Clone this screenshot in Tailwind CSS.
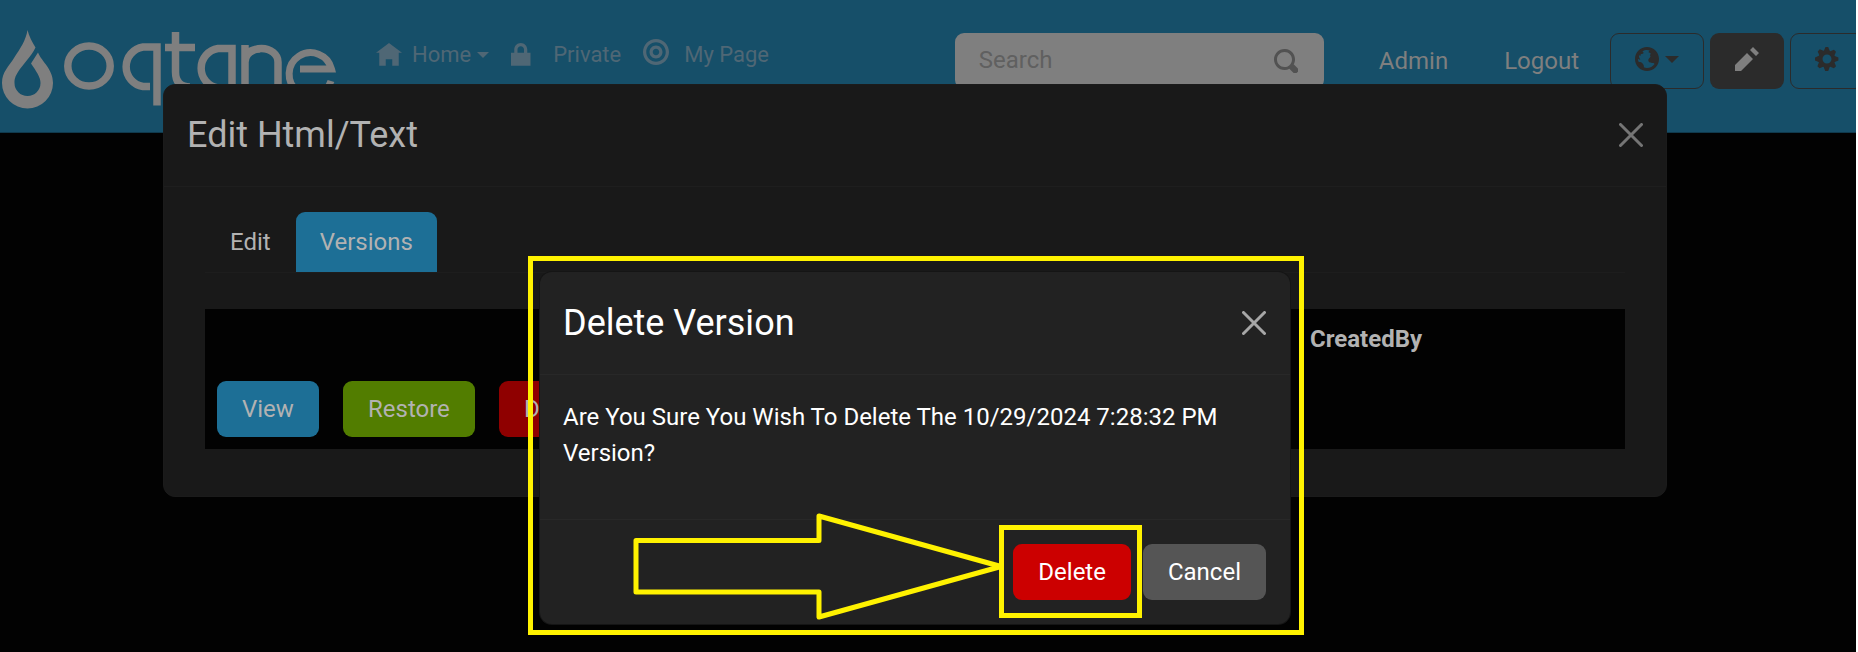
<!DOCTYPE html>
<html lang="en">
<head>
<meta charset="utf-8">
<meta name="viewport" content="width=device-width, initial-scale=1">
<title>Oqtane - Edit Html/Text</title>
<script src="https://cdn.jsdelivr.net/npm/@tailwindcss/browser@4"></script>
</head>
<body class="relative min-h-screen overflow-hidden border-r-2 border-white bg-[#020202] font-['Roboto',sans-serif] text-[24px] leading-9 text-[#b2b2b2]">

<header class="flex h-[133px] items-start overflow-hidden border-b border-[#10394c] bg-[#164f69]">
  <a href="#" aria-label="Oqtane" class="shrink-0">
    <svg class="h-[133px] w-[340px]" viewBox="0 0 340 133" fill="none" stroke="#7f7f7f" stroke-width="7.500">
      <path fill="#7f7f7f" stroke="none" d="M27.500 30C29 36 32 42 35.500 47.500C31 57 23 64 18 72C15 77 14.500 79 14.500 83A13 13 0 0 0 40.500 83C40.500 77 36 71 31 63.500L38 52.500C42 62 53 69 53 83A25.500 25.500 0 0 1 2 83C2 72 9 66 14 58C20 49 26 40 27.500 30Z"/>
      <ellipse cx="89" cy="66" rx="21.200" ry="20"/>
      <path d="M150 86.500H143A20 20 0 0 1 143 47H157V105.500"/>
      <path d="M175.500 32V72Q175.500 87 190 87M165 47.500H195"/>
      <path d="M225 88H218A20 20 0 0 1 218 48.500H232V92"/>
      <path d="M245 92V45M245 62A16.500 13.500 0 0 1 278 62V92M245 62Q246 49 260 49"/>
      <path d="M300 69H331.500A21.500 21.500 0 1 0 331 81" stroke-width="7"/>
    </svg>
  </a>
  <nav class="ml-9 flex items-center gap-[22px] pt-[37px] text-[22px] text-[#4f6775]">
    <a href="#" class="flex items-center">
      <svg class="mr-[10px] size-[26px]" viewBox="0 0 8 8" fill="currentColor"><path d="M4 .3l-4 3h1v4h2v-2h2v2h2v-4.030l1 .030-4-3z"/></svg>
      Home
      <svg class="ml-[6px] h-[6px] w-3" viewBox="0 0 12 6" fill="currentColor"><path d="M0 0h12L6 6z"/></svg>
    </a>
    <a href="#" class="flex items-center">
      <svg class="mr-[16px] size-[26px]" viewBox="0 0 8 8" fill="currentColor"><path d="M3 .3c-1.100 0-2 .9-2 2v1h-1v4h6v-4h-1v-1c0-1.100-.9-2-2-2zm0 1c.56 0 1 .44 1 1v1h-2v-1c0-.56.44-1 1-1z"/></svg>
      Private
    </a>
    <a href="#" class="flex items-center">
      <svg class="mr-[15px] mb-[6px] size-[26px]" viewBox="0 0 8 8" fill="currentColor"><path d="M4 0c-2.200 0-4 1.800-4 4s1.800 4 4 4 4-1.800 4-4-1.800-4-4-4zm0 1c1.660 0 3 1.340 3 3s-1.340 3-3 3-3-1.340-3-3 1.340-3 3-3zm0 1c-1.100 0-2 .9-2 2s.9 2 2 2 2-.9 2-2-.9-2-2-2zm0 1c.56 0 1 .44 1 1s-.44 1-1 1-1-.44-1-1 .44-1 1-1z"/></svg>
      My Page
    </a>
  </nav>
  <div class="-mr-[8px] ml-auto flex shrink-0 items-center pt-[33px]">
    <form class="flex h-14 w-[369px] items-center rounded-[9px] bg-[#7f7f7f] pr-[26px] pl-6" role="search">
      <input type="text" placeholder="Search" aria-label="Search" class="mb-[2px] min-w-0 flex-1 bg-transparent outline-none placeholder:text-[#606060]">
      <button type="button" aria-label="Search" class="text-[#525252]">
        <svg class="size-6" viewBox="0 0 8 8" fill="currentColor"><path d="M3.500 0c-1.930 0-3.500 1.570-3.500 3.500s1.570 3.500 3.500 3.500c.59 0 1.170-.14 1.660-.41a1 1 0 0 0 .13.13l1 1a1.020 1.020 0 1 0 1.440-1.440l-1-1a1 1 0 0 0-.16-.13c.27-.49.44-1.060.44-1.660 0-1.930-1.550-3.500-3.500-3.500zm0 1c1.390 0 2.500 1.110 2.500 2.500 0 .66-.24 1.270-.66 1.720l-.03.03a1 1 0 0 0-.13.13c-.44.4-1.040.63-1.690.63-1.390 0-2.500-1.110-2.500-2.500s1.110-2.500 2.500-2.500z"/></svg>
      </button>
    </form>
    <a href="#" class="ml-[55px] text-[#7f7f7f]">Admin</a>
    <a href="#" class="ml-14 text-[#7f7f7f]">Logout</a>
    <div class="ml-[31px] flex gap-[6px] text-[#2b2b2b]">
      <button type="button" aria-label="Language" class="flex h-14 w-[94px] items-center justify-center gap-[6px] rounded-[9px] border border-[#2b2b2b] pb-1">
        <svg class="size-6" viewBox="0 0 8 8" fill="currentColor"><path d="M4 0c-2.200 0-4 1.800-4 4s1.800 4 4 4 4-1.800 4-4-1.800-4-4-4zm0 1c.33 0 .64.09.94.19-.21.2-.45.38-.41.56.04.18.69.13.69.5 0 .27-.42.35-.13.66.35.35-.64.98-.66 1.440-.03.83.84.97 1.530.97.42 0 .53.2.5.44-.54.77-1.460 1.250-2.470 1.250-.38 0-.73-.09-1.060-.22.22-.44-.28-1.310-.75-1.590-.23-.23-.72-.14-1-.25-.09-.27-.18-.54-.19-.84.03-.05.08-.09.16-.09.19 0 .45.38.59.34.18-.04-.74-1.310-.31-1.560.2-.12.6.39.47-.16-.12-.51.36-.28.66-.41.26-.11.45-.41.13-.59-.06-.03-.13-.1-.22-.19.45-.27.97-.44 1.530-.44z"/></svg>
        <svg class="h-[7px] w-[14px]" viewBox="0 0 14 7" fill="currentColor"><path d="M0 0h14L7 7z"/></svg>
      </button>
      <button type="button" aria-label="Edit page" class="flex h-14 w-[74px] items-center justify-center rounded-[9px] bg-[#2b2b2b] pb-1 text-[#7f7f7f]">
        <svg class="size-6" viewBox="0 0 8 8" fill="currentColor"><path d="M6 0l-1 1 2 2 1-1-2-2zm-2 2l-4 4v2h2l4-4-2-2z"/></svg>
      </button>
      <button type="button" aria-label="Settings" class="flex h-14 w-[74px] items-center justify-center rounded-[9px] border border-[#2b2b2b] pb-1">
        <svg class="size-6" viewBox="0 0 8 8" fill="currentColor"><path d="M3.500 0l-.5 1.190-.2.1-1.200-.5-.7.7.5 1.200-.1.2-1.300.6v1l1.200.5.1.2-.5 1.200.7.7 1.200-.5.2.1.5 1.300h1l.5-1.300.2-.1 1.200.5.7-.7-.5-1.200.1-.2 1.200-.5v-1l-1.200-.5-.1-.2.5-1.200-.7-.7-1.200.5-.2-.1-.5-1.290h-1zm.5 2.500c.83 0 1.500.67 1.500 1.500s-.67 1.500-1.500 1.500-1.500-.67-1.500-1.500.67-1.500 1.500-1.500z"/></svg>
      </button>
    </div>
  </div>
</header>

<!-- Edit module dialog -->
<div class="absolute inset-x-0 top-0 pt-[84px] pr-[189px] pl-[163px]">
  <section role="dialog" aria-labelledby="edit-title" class="rounded-xl border border-[#1b1b1b] bg-[#191919]">
    <div class="flex items-center justify-between border-b border-[#1e1e1e] pt-[23px] pr-[23px] pb-6 pl-[23px]">
      <h2 id="edit-title" class="text-[36px] leading-[54px]">Edit Html/Text</h2>
      <button type="button" aria-label="Close" class="text-[#757575]">
        <svg class="size-6" viewBox="0 0 24 24" stroke="currentColor" stroke-width="3" stroke-linecap="round"><path d="M1.500 1.500l21 21M22.500 1.500l-21 21"/></svg>
      </button>
    </div>
    <div class="px-[41px] pt-[25px] pb-[47px]">
      <ul role="tablist" class="flex border-b border-[#1d1d1d]">
        <li><button type="button" role="tab" aria-selected="false" class="h-[60px] px-[25px]">Edit</button></li>
        <li><button type="button" role="tab" aria-selected="true" class="h-[60px] rounded-t-[9px] bg-[#1d6f96] px-6">Versions</button></li>
      </ul>
      <table class="mt-9 w-full table-fixed border-collapse bg-[#020202] text-left">
        <thead>
          <tr>
            <th class="w-[126px] p-3"></th>
            <th class="w-[156px] p-3"></th>
            <th class="w-[141px] p-3"></th>
            <th class="p-3"></th>
            <th class="w-[327px] p-3 font-bold">CreatedBy</th>
          </tr>
        </thead>
        <tbody>
          <tr>
            <td class="p-3"><button type="button" class="block h-14 rounded-[9px] bg-[#1d6f96] px-[25px]">View</button></td>
            <td class="p-3"><button type="button" class="block h-14 rounded-[9px] bg-[#527d00] px-[25px]">Restore</button></td>
            <td class="p-3"><button type="button" class="block h-14 rounded-[9px] bg-[#8f0000] px-[25px]">Delete</button></td>
            <td class="p-3"></td>
            <td class="p-3"></td>
          </tr>
        </tbody>
      </table>
    </div>
  </section>
</div>

<!-- Delete confirmation dialog -->
<div class="absolute inset-x-0 top-0 pt-[272px] pr-[26px]">
  <section role="dialog" aria-labelledby="delete-title" class="relative mx-auto w-full max-w-[750px] rounded-xl bg-[#222222] text-white shadow-[0_0_0_1px_#151515]">
    <div class="flex items-center justify-between border-b border-[#282828] py-6 pr-6 pl-[23px]">
      <h2 id="delete-title" class="text-[36px] leading-[54px]">Delete Version</h2>
      <button type="button" aria-label="Close" class="text-[#a7a7a7]">
        <svg class="size-6" viewBox="0 0 24 24" stroke="currentColor" stroke-width="3" stroke-linecap="round"><path d="M1.500 1.500l21 21M22.500 1.500l-21 21"/></svg>
      </button>
    </div>
    <p class="pt-6 pr-6 pb-12 pl-[23px]">Are You Sure You Wish To Delete The 10/29/2024 7:28:32 PM Version?</p>
    <div class="flex justify-end gap-3 border-t border-[#282828] p-6">
      <div class="relative">
        <button type="button" class="h-14 rounded-[9px] bg-[#cc0000] px-[25px]">Delete</button>
        <div class="pointer-events-none absolute -top-[19px] -right-[11px] -bottom-[18px] -left-[14px] border-5 border-[#fff200]"></div>
        <svg class="pointer-events-none absolute right-[128px] -top-[32px] h-[108px] w-[372px]" viewBox="0 0 372 108" fill="none" stroke="#fff200" stroke-width="5" stroke-linejoin="round"><path d="M5 28.500H188V4L370 54.500L188 105V80H5Z"/></svg>
      </div>
      <button type="button" class="h-14 rounded-[9px] bg-[#555555] px-[25px]">Cancel</button>
    </div>
    <div class="pointer-events-none absolute -top-4 -right-[14px] -bottom-[11px] -left-3 border-5 border-[#fff200]"></div>
  </section>
</div>
</body>
</html>
